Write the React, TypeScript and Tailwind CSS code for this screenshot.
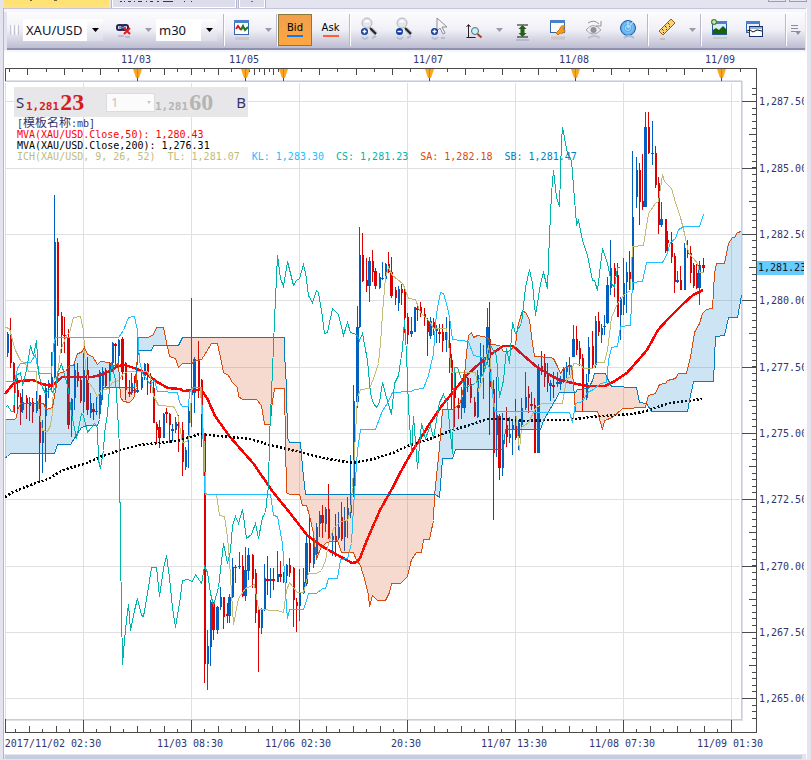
import type { ReactNode } from 'react';

type Candle = [number, number, number, number, number, 'b' | 'r'];

// x, high, low, body top, body bottom, direction
const candles: Candle[] = [
  [7, 332, 357, 334, 353, 'b'], [10, 318, 368, 334, 363, 'r'], [13, 362, 382, 363, 379, 'r'], [14, 378, 413, 379, 388, 'r'],
  [17, 378, 410, 390, 397, 'r'], [20, 393, 425, 397, 412, 'r'], [22, 389, 413, 402, 410, 'b'], [26, 395, 419, 398, 404, 'r'],
  [29, 397, 421, 402, 406, 'b'], [32, 398, 423, 402, 412, 'r'], [36, 391, 413, 401, 411, 'b'], [39, 395, 482, 395, 443, 'r'],
  [42, 420, 473, 430, 443, 'b'], [45, 383, 462, 388, 416, 'b'], [48, 380, 398, 383, 388, 'b'], [51, 352, 390, 377, 387, 'b'],
  [54, 195, 380, 242, 378, 'b'], [57, 238, 346, 242, 316, 'r'], [61, 312, 353, 316, 335, 'r'], [64, 317, 353, 335, 336, 'r'],
  [68, 329, 429, 338, 425, 'r'], [71, 398, 437, 399, 420, 'b'], [74, 362, 410, 370, 398, 'b'], [77, 363, 387, 372, 381, 'r'],
  [80, 377, 403, 380, 401, 'r'], [83, 353, 413, 370, 402, 'b'], [87, 357, 415, 370, 410, 'r'], [90, 393, 418, 403, 413, 'b'],
  [93, 403, 420, 409, 412, 'r'], [96, 397, 415, 411, 412, 'b'], [99, 370, 417, 372, 412, 'b'], [102, 367, 400, 371, 386, 'b'],
  [105, 368, 388, 370, 386, 'r'], [109, 362, 387, 363, 377, 'b'], [112, 342, 372, 343, 363, 'b'], [115, 343, 365, 344, 346, 'r'],
  [118, 339, 367, 340, 356, 'b'], [122, 337, 380, 339, 372, 'r'], [125, 362, 400, 363, 390, 'r'], [129, 380, 397, 392, 394, 'r'],
  [131, 373, 395, 383, 393, 'b'], [134, 376, 393, 390, 391, 'r'], [137, 380, 393, 390, 392, 'b'], [141, 373, 390, 377, 388, 'b'],
  [144, 363, 380, 364, 376, 'b'], [147, 363, 395, 364, 377, 'r'], [150, 373, 393, 380, 387, 'r'], [153, 380, 423, 388, 423, 'r'],
  [156, 422, 443, 424, 430, 'r'], [159, 420, 448, 427, 438, 'r'], [163, 413, 438, 414, 438, 'b'], [166, 408, 423, 412, 414, 'r'],
  [169, 413, 443, 414, 425, 'r'], [172, 424, 441, 429, 431, 'b'], [175, 417, 433, 422, 430, 'b'], [178, 415, 452, 424, 426, 'r'],
  [182, 422, 476, 430, 462, 'r'], [185, 447, 470, 450, 467, 'b'], [188, 407, 468, 411, 437, 'b'], [191, 298, 427, 391, 395, 'b'],
  [194, 357, 413, 359, 393, 'b'], [198, 341, 398, 359, 388, 'r'], [201, 379, 447, 380, 430, 'r'], [204, 433, 683, 433, 664, 'r'],
  [207, 630, 690, 646, 664, 'b'], [210, 600, 666, 602, 647, 'b'], [213, 602, 640, 603, 630, 'r'], [217, 606, 634, 607, 630, 'b'],
  [220, 587, 610, 597, 607, 'b'], [223, 597, 629, 597, 617, 'r'], [227, 603, 623, 614, 616, 'r'], [229, 594, 623, 597, 616, 'b'],
  [232, 558, 598, 567, 597, 'b'], [235, 565, 583, 567, 568, 'b'], [239, 552, 569, 566, 567, 'b'], [242, 555, 597, 566, 596, 'r'],
  [245, 547, 601, 570, 596, 'b'], [248, 548, 580, 555, 571, 'b'], [252, 554, 588, 555, 579, 'r'], [255, 569, 623, 573, 613, 'r'],
  [258, 608, 672, 610, 628, 'r'], [261, 608, 634, 609, 628, 'b'], [264, 564, 611, 578, 609, 'b'], [267, 556, 595, 579, 581, 'r'],
  [270, 568, 598, 579, 581, 'b'], [273, 568, 590, 579, 581, 'r'], [277, 551, 582, 574, 582, 'b'], [280, 561, 582, 574, 577, 'r'],
  [283, 572, 583, 576, 582, 'r'], [286, 564, 583, 565, 576, 'b'], [289, 558, 577, 565, 573, 'r'], [293, 567, 627, 568, 600, 'r'],
  [296, 598, 632, 602, 606, 'r'], [299, 569, 621, 593, 606, 'b'], [303, 568, 594, 582, 593, 'b'], [306, 536, 586, 543, 584, 'b'],
  [309, 515, 572, 543, 563, 'r'], [313, 537, 568, 540, 564, 'b'], [316, 523, 557, 527, 554, 'b'], [319, 511, 537, 515, 524, 'b'],
  [322, 505, 538, 515, 523, 'r'], [325, 507, 532, 509, 524, 'b'], [328, 484, 539, 509, 538, 'r'], [332, 533, 556, 536, 540, 'b'],
  [335, 514, 557, 536, 542, 'r'], [338, 512, 540, 527, 538, 'b'], [341, 502, 541, 517, 539, 'r'], [344, 507, 551, 520, 537, 'b'],
  [347, 497, 538, 508, 519, 'b'], [350, 455, 518, 493, 513, 'b'], [353, 385, 497, 401, 488, 'b'], [357, 306, 408, 327, 402, 'b'],
  [359, 227, 328, 255, 327, 'b'], [362, 233, 282, 255, 281, 'r'], [366, 258, 292, 280, 286, 'r'], [369, 257, 302, 261, 286, 'b'],
  [372, 250, 282, 261, 272, 'r'], [375, 268, 289, 271, 286, 'r'], [379, 273, 289, 277, 288, 'b'], [382, 262, 280, 278, 279, 'b'],
  [385, 263, 280, 264, 279, 'b'], [388, 252, 273, 264, 272, 'r'], [391, 257, 298, 272, 296, 'r'], [395, 287, 305, 290, 298, 'r'],
  [398, 286, 311, 289, 303, 'b'], [401, 284, 305, 289, 293, 'r'], [404, 288, 333, 292, 318, 'r'], [407, 313, 344, 317, 335, 'r'],
  [411, 317, 337, 331, 334, 'b'], [414, 307, 332, 307, 332, 'b'], [417, 305, 321, 308, 310, 'r'], [420, 302, 317, 307, 314, 'r'],
  [424, 308, 326, 314, 318, 'r'], [427, 318, 356, 321, 332, 'r'], [430, 317, 339, 321, 336, 'b'], [433, 318, 335, 322, 328, 'r'],
  [436, 325, 343, 328, 331, 'b'], [439, 324, 343, 332, 334, 'r'], [442, 324, 352, 332, 341, 'r'], [446, 317, 352, 332, 340, 'b'],
  [449, 317, 373, 343, 360, 'r'], [451, 354, 410, 360, 390, 'r'], [454, 372, 427, 373, 398, 'r'], [458, 398, 419, 405, 408, 'r'],
  [461, 387, 419, 397, 408, 'b'], [464, 370, 413, 374, 408, 'b'], [467, 377, 392, 378, 385, 'r'], [470, 378, 403, 384, 398, 'r'],
  [474, 397, 417, 402, 416, 'r'], [477, 370, 418, 375, 417, 'b'], [480, 343, 383, 358, 375, 'b'], [483, 345, 399, 357, 370, 'b'],
  [487, 308, 363, 327, 360, 'b'], [489, 302, 435, 339, 387, 'r'], [493, 380, 520, 389, 453, 'r'], [496, 377, 457, 415, 435, 'b'],
  [499, 414, 480, 416, 468, 'r'], [502, 413, 476, 440, 468, 'b'], [506, 407, 447, 425, 437, 'r'], [509, 417, 443, 434, 438, 'b'],
  [512, 420, 455, 425, 430, 'b'], [515, 399, 440, 425, 438, 'r'], [518, 420, 450, 423, 438, 'b'], [521, 398, 427, 408, 425, 'b'],
  [525, 372, 410, 397, 408, 'b'], [528, 386, 413, 394, 398, 'r'], [531, 392, 410, 404, 406, 'r'], [534, 398, 453, 405, 453, 'r'],
  [538, 364, 453, 367, 453, 'b'], [541, 351, 375, 366, 370, 'r'], [544, 354, 387, 363, 377, 'r'], [547, 363, 392, 373, 383, 'r'],
  [550, 380, 401, 383, 386, 'b'], [553, 372, 398, 385, 387, 'r'], [557, 372, 387, 382, 384, 'b'], [560, 376, 390, 381, 384, 'b'],
  [563, 367, 383, 368, 382, 'b'], [566, 362, 383, 367, 372, 'b'], [569, 357, 375, 365, 367, 'b'], [573, 325, 357, 339, 357, 'b'],
  [576, 326, 355, 339, 350, 'r'], [579, 341, 366, 348, 359, 'r'], [582, 354, 411, 358, 398, 'r'], [586, 374, 400, 383, 398, 'b'],
  [588, 337, 382, 347, 374, 'b'], [592, 331, 368, 346, 365, 'r'], [595, 316, 368, 321, 365, 'b'], [598, 312, 336, 321, 332, 'r'],
  [601, 324, 343, 328, 335, 'b'], [604, 315, 335, 326, 327, 'b'], [607, 277, 324, 285, 323, 'b'], [610, 240, 295, 268, 288, 'b'],
  [614, 263, 297, 268, 276, 'r'], [617, 263, 317, 275, 317, 'r'], [620, 297, 340, 298, 315, 'b'], [623, 258, 315, 283, 305, 'b'],
  [626, 262, 313, 272, 282, 'b'], [629, 251, 290, 272, 289, 'r'], [632, 151, 291, 217, 290, 'b'], [636, 157, 208, 170, 197, 'b'],
  [639, 163, 225, 170, 202, 'r'], [642, 154, 210, 201, 207, 'r'], [645, 112, 207, 127, 207, 'b'], [648, 112, 154, 127, 153, 'r'],
  [652, 121, 165, 153, 154, 'b'], [655, 146, 188, 153, 185, 'r'], [658, 177, 234, 183, 225, 'r'], [661, 202, 227, 219, 225, 'b'],
  [665, 219, 253, 219, 251, 'r'], [667, 231, 254, 240, 243, 'r'], [671, 232, 263, 243, 257, 'r'], [674, 253, 293, 256, 282, 'r'],
  [677, 271, 283, 280, 282, 'b'], [680, 266, 290, 280, 290, 'r'], [684, 243, 290, 248, 290, 'b'], [687, 240, 258, 250, 254, 'r'],
  [690, 246, 283, 253, 273, 'r'], [693, 263, 288, 265, 286, 'r'], [696, 264, 289, 273, 288, 'r'], [699, 261, 305, 265, 288, 'b'],
  [703, 258, 272, 265, 268, 'r'],
];

// bars whose body gets the full three pixels
const wideBars = [68, 87, 122, 159, 194, 213, 217, 229, 245, 248, 306, 322, 357, 369, 375, 391, 430, 446, 464, 487, 499, 538, 573, 607, 645, 661, 699];

const spanA =
  '5,419 14,419 16,417 17,410 20,403 43,403 46,409 52,407 55,390 58,373 65,371 69,365 73,365 77,353 81,352 84,347 87,354 92,356 97,364 100,361 108,362 112,366 118,363 120,397 123,401 129,402 133,398 136,387 137,337 148,337 153,334 156,327 163,327 165,337 169,356 175,358 178,367 182,363 192,363 193,361 201,359 205,353 211,343 217,343 220,357 223,372 228,375 232,382 237,387 238,396 242,399 256,399 261,405 264,424 270,424 271,408 274,388 284,388 285,440 286,492 289,494 299,494 302,505 306,505 309,515 313,533 316,559 320,548 326,542 337,540 341,552 353,552 356,560 360,565 365,582 368,595 369,606 372,595 377,600 385,600 389,592 391,583 400,583 407,576 411,559 416,552 421,552 423,539 429,539 433,520 434,495 439,447 442,409 453,409 460,402 463,387 466,353 468,335 471,332 473,337 477,335 487,337 491,344 499,345 503,351 508,351 515,345 517,327 522,310 526,313 529,320 532,343 534,356 550,357 553,358 557,366 560,373 563,368 571,365 573,383 575,411 597,411 602,429 604,420 612,417 622,408 645,407 648,395 655,393 659,384 665,383 667,380 675,378 678,373 686,373 690,357 694,332 699,323 702,313 706,309 712,308 714,273 716,263 724,263 728,243 732,237 734,237 737,232 741,231';

const spanB =
  '5,457 7,456 10,453 54,453 57,444 70,444 77,433 81,427 87,425 97,425 99,419 102,390 103,387 134,387 137,360 138,350 151,350 153,345 178,345 182,337 284,337 284,353 286,387 287,437 289,442 300,442 302,467 305,494 435,494 439,497 442,458 452,458 455,449 503,449 505,429 540,429 543,420 550,408 559,392 575,392 577,389 588,388 592,380 594,373 605,373 607,378 611,386 636,387 639,402 646,403 651,411 687,411 689,400 693,381 713,381 715,336 724,335 728,317 737,317 741,295';

const tenkan =
  '5,327 9,328 12,340 15,350 20,360 25,363 28,371 36,371 37,393 39,413 42,430 47,431 50,425 52,413 53,380 57,375 60,350 66,335 69,332 73,317 80,316 83,330 85,367 88,382 93,388 97,397 100,390 108,388 112,382 118,380 123,373 128,371 147,371 150,377 153,395 158,405 173,406 177,413 182,442 187,441 189,433 191,393 192,387 200,387 201,407 204,447 205,494 216,494 219,515 224,516 227,537 229,560 233,624 238,598 245,588 254,584 258,609 277,610 283,612 286,590 289,582 292,586 297,592 303,592 308,573 316,573 321,570 325,560 328,543 333,528 340,521 347,520 350,510 352,487 355,433 357,397 360,389 369,388 373,378 378,363 380,343 382,313 385,277 388,267 392,275 402,283 404,287 408,298 415,299 420,312 430,322 433,328 446,328 448,343 451,372 475,372 478,390 482,380 484,369 486,357 488,345 490,362 493,400 495,411 515,411 517,430 519,450 521,427 528,422 535,408 541,403 562,403 566,378 570,377 573,363 580,364 583,368 592,368 597,362 604,362 607,350 611,317 617,303 624,294 630,290 632,246 643,245 648,213 655,203 658,201 662,174 664,181 671,188 675,202 680,217 684,233 688,252 697,263 699,272 703,272';

const kijun =
  '5,381 14,381 17,368 20,363 30,362 35,354 37,367 39,373 51,373 53,345 55,337 118,337 123,330 128,317 134,316 137,330 139,360 142,373 150,384 154,380 157,391 177,392 179,402 182,406 188,406 189,392 192,387 201,387 202,420 203,457 204,492 207,494 270,494 273,515 277,516 282,543 284,573 286,607 287,618 289,609 303,609 306,600 308,593 316,593 322,588 325,588 328,578 337,578 340,559 347,558 351,543 353,507 357,450 360,429 375,429 379,418 382,410 387,403 392,392 410,391 415,389 423,388 428,375 433,353 435,323 437,307 440,292 443,293 447,307 449,317 452,339 468,341 473,355 483,357 489,367 492,393 494,411 569,412 572,422 575,403 582,401 587,392 593,389 600,383 606,382 608,360 611,347 617,346 620,326 630,325 632,282 642,281 646,262 662,262 666,255 670,242 675,238 678,229 684,226 699,226 703,214';

const chikou =
  '5,407 7,405 11,411 13,411 16,375 20,372 22,385 26,370 30,345 33,355 36,340 38,373 42,387 45,393 50,388 52,392 55,387 57,373 61,364 65,377 68,390 71,413 76,438 81,413 83,415 87,432 94,423 97,427 98,460 100,468 103,450 104,433 107,413 111,362 115,380 117,410 119,447 120,553 122,664 124,640 126,620 128,604 130,630 134,610 137,598 141,615 143,616 147,593 151,567 156,567 159,596 163,568 166,555 169,577 172,607 175,627 179,603 182,580 187,579 192,581 195,574 201,583 204,566 207,572 210,593 213,605 218,587 223,543 227,563 230,550 232,525 235,516 238,523 242,509 246,538 251,534 255,523 258,538 262,517 265,512 267,493 268,487 269,437 272,370 274,320 277,255 280,278 283,286 287,261 293,285 296,280 299,278 303,264 305,272 308,295 312,302 316,290 318,292 322,317 324,333 327,332 332,308 338,314 343,335 347,322 350,332 356,334 359,340 362,333 367,360 370,393 373,403 376,407 379,402 382,382 386,397 391,414 394,383 398,375 402,348 404,320 406,353 408,407 411,452 413,416 417,468 421,423 425,438 430,425 433,438 439,402 443,394 447,403 452,453 454,367 457,367 462,382 465,387 475,383 483,373 487,360 490,345 496,355 499,397 503,380 506,348 509,363 512,322 515,333 521,323 525,287 529,269 532,283 535,315 537,303 540,283 543,272 547,288 549,235 551,193 553,170 556,197 559,206 561,140 562,127 567,153 571,160 576,224 578,220 582,240 587,255 592,280 594,280 597,290 602,248 607,263 611,283 614,287 617,267 619,267';

const mva50 =
  '5,394 13,384 20,381 33,380 42,384 52,386 62,377 92,377 100,375 110,371 118,366 125,365 137,369 147,374 157,382 168,388 180,389 183,391 197,390 201,389 208,400 215,416 230,437 253,463 273,492 290,513 307,535 323,547 343,558 352,563 357,562 360,558 367,540 380,510 393,487 400,473 413,450 427,428 440,408 453,392 467,375 480,363 490,355 503,346 513,346 523,355 537,367 550,375 560,380 577,384 587,386 605,386 613,382 627,373 647,350 658,330 667,320 683,304 693,295 703,290';

const mva200 =
  '5,497 13,492 33,484 48,479 63,470 87,463 100,457 120,450 140,445 177,441 200,434 208,435 230,437 250,439 270,445 300,452 323,458 353,463 373,459 393,453 410,445 427,440 450,431 463,427 488,419 503,419 523,421 550,420 570,420 590,417 617,415 632,414 647,411 660,406 670,403 687,401 702,399';

const gridX = [83, 191, 299, 407, 515, 623, 731];
const gridY = [101, 168, 234, 300, 367, 433, 499, 566, 632, 698];
const prices = ['1,287.50', '1,285.00', '1,282.50', '1,280.00', '1,277.50', '1,275.00', '1,272.50', '1,270.00', '1,267.50', '1,265.00'];

const topTicks = [9, 27, 46, 64, 82, 100, 118, 150, 164, 177, 191, 204, 218, 231, 249, 254, 259, 264, 269, 273, 278, 301, 319, 337, 356, 374, 392, 410, 447, 465, 483, 502, 520, 538, 556, 593, 611, 629, 648, 666, 684, 702, 740];
const tallTopTicks = [27, 64, 100, 164, 191, 218, 254, 264, 273, 319, 356, 392, 465, 502, 538, 611, 648, 684];

const dayMarks = [
  { x: 137, label: '11/03' },
  { x: 245, label: '11/05' },
  { x: 283, label: '' },
  { x: 429, label: '11/07' },
  { x: 575, label: '11/08' },
  { x: 721, label: '11/09' },
];

const timeLabels = [
  { x: 53, label: '2017/11/02 02:30' },
  { x: 190, label: '11/03 08:30' },
  { x: 298, label: '11/06 02:30' },
  { x: 406, label: '20:30' },
  { x: 514, label: '11/07 13:30' },
  { x: 622, label: '11/08 07:30' },
  { x: 730, label: '11/09 01:30' },
];

const bottomTicks = Array.from({ length: 54 }, (_, i) => {
  const x = Math.round(15 + i * 13.5);
  return { x, major: i % 8 === 5, tall: i % 2 === 1 };
});

// one tick per 0.25, from 1,264.25 up to 1,288.00
const priceTicks = Array.from({ length: 96 }, (_, i) => Math.round(718 - i * 6.634));

const reversed = (points: string) => points.split(' ').reverse().join(' ');

function Line({ points, color }: { points: string; color: string }) {
  return <polyline points={points} fill="none" stroke={color} />;
}

function Chart() {
  const cloud = `${spanA} ${reversed(spanB)}`;
  return (
    <svg viewBox="4 52 802 702" className="block w-full" role="img" aria-label="XAU/USD m30 chart">
      <defs>
        <clipPath id="above-b">
          <polygon points={`5,81 ${spanB} 741,81`} />
        </clipPath>
        <clipPath id="below-b">
          <polygon points={`5,720 ${spanB} 741,720`} />
        </clipPath>
        <clipPath id="labels">
          <rect x="4" y="52" width="800" height="702" />
        </clipPath>
      </defs>

      {/* Grid */}
      <g shapeRendering="crispEdges" fill="#e0e0e0">
        {gridX.map((x) => <rect key={x} x={x} y="83" width="1" height="637" />)}
        {gridY.map((y) => <rect key={y} x="5" y={y} width="735" height="1" />)}
        <rect x="5" y="83" width="1" height="637" />
      </g>
      <g shapeRendering="crispEdges">
        <rect x="5" y="80" width="737" height="1" fill="#dde2ea" />
        <rect x="5" y="81" width="737" height="1" fill="#c5cdd9" />
        <rect x="741" y="81" width="1" height="639" fill="#c5cddd" />
        <rect x="742" y="81" width="1" height="640" fill="#dde2ea" />
        <rect x="5" y="719" width="737" height="1" fill="#c5cddd" />
        <rect x="5" y="720" width="737" height="1" fill="#e0e0e6" />
      </g>

      {/* Candles */}
      <g shapeRendering="crispEdges">
        {candles.map(([x, high, low, top, bottom, dir]) => {
          const wide = wideBars.includes(x) || bottom - top < 4;
          return (
            <g key={x} fill={dir === 'b' ? '#0060c0' : '#dc0000'}>
              <rect x={x} y={high} width="1" height={low - high} />
              <rect x={wide ? x - 1 : x} y={top} width={wide ? 3 : 2} height={Math.max(bottom - top, 1)} />
            </g>
          );
        })}
      </g>

      <g shapeRendering="crispEdges">
        <polyline points={mva50} fill="none" stroke="#ff0000" strokeWidth="2.5" />
        <polyline points={mva200} fill="none" stroke="#000000" strokeWidth="2.5" strokeDasharray="2 2" />

        {/* Ichimoku cloud */}
        <polygon points={cloud} fill="#007ac1" fillOpacity="0.2" clipPath="url(#above-b)" />
        <polygon points={cloud} fill="#d84410" fillOpacity="0.2" clipPath="url(#below-b)" />
        <g transform="translate(0.5 0.5)">
          <Line points={tenkan} color="#c0bc78" />
          <Line points={spanA} color="#d94a0b" />
          <Line points={spanB} color="#0080c0" />
          <Line points={kijun} color="#1ec0ff" />
          <Line points={chikou} color="#00b4ac" />
        </g>
      </g>

      {/* Axes */}
      <g shapeRendering="crispEdges" fill="#4a4a4a">
        <rect x="5" y="68" width="752" height="1" />
        <rect x="5" y="68" width="1" height="13" />
        <rect x="756" y="68" width="1" height="665" />
        <rect x="5" y="732" width="752" height="1" />
        <rect x="5" y="719" width="1" height="13" />
        {topTicks.map((x) => (
          <rect key={x} x={x} y="68" width="1" height={tallTopTicks.includes(x) ? 7 : 4} />
        ))}
        {bottomTicks.map((t) => (
          <rect key={t.x} x={t.x} y={t.major ? 720 : t.tall ? 726 : 729} width="1" height={t.major ? 12 : t.tall ? 6 : 3} />
        ))}
        {priceTicks.map((y) => <rect key={y} x="752" y={y} width="4" height="1" />)}
        {gridY.map((y) => <rect key={y} x="742" y={y} width="14" height="1" />)}
        {gridY.slice(0, 9).map((y) => <rect key={y} x="749" y={y + 33} width="7" height="1" />)}
      </g>
      {dayMarks.map((m) => (
        <g key={m.x}>
          <rect x={m.x} y="69" width="1" height="12" fill="#4a4a4a" />
          <path d={`M${m.x - 4} 69h9l-3 9h-3z`} fill="#fca61f" />
          <rect x={m.x} y="69" width="1" height="9" fill="#d98416" />
        </g>
      ))}

      <g clipPath="url(#labels)" fill="#34346c" fontFamily="'DejaVu Sans Mono', monospace" fontSize="10">
        <rect x="757" y="261" width="48" height="14" fill="#66ccff" />
        <g textAnchor="middle">
          {dayMarks.map((m) => <text key={m.x} x={m.x - 1} y="63">{m.label}</text>)}
          {timeLabels.map((t) => <text key={t.label} x={t.x} y="747">{t.label}</text>)}
        </g>
        {gridY.map((y, i) => <text key={y} x="759" y={y + 4}>{prices[i]}</text>)}
        <text x="758" y="271" fill="#101828">1,281.23</text>
      </g>
    </svg>
  );
}

function Legend() {
  return (
    <div className="absolute top-[68px] left-[13px] font-['DejaVu_Sans_Mono','Noto_Sans_CJK_SC',monospace] text-[10px] leading-[11px] whitespace-pre text-[#34346c]">
      <p>[<span className="text-[12px]">模板名称</span>:mb]</p>
      <p className="text-[#ff0000]">MVA(XAU/USD.Close,50): 1,280.43</p>
      <p className="text-black">MVA(XAU/USD.Close,200): 1,276.31</p>
      <p className="flex gap-3">
        <span className="text-[#c0bc78]">ICH(XAU/USD, 9, 26, 52)</span>
        <span className="text-[#c0bc78]">TL: 1,281.07</span>
        <span className="text-[#1ec0ff]">KL: 1,283.30</span>
        <span className="text-[#00b4ac]">CS: 1,281.23</span>
        <span className="text-[#d94a0b]">SA: 1,282.18</span>
        <span className="text-[#0080c0]">SB: 1,281.47</span>
      </p>
    </div>
  );
}

function QuotePanel() {
  return (
    <div className="absolute top-[37px] left-[10px] flex h-[30px] w-[234px] items-center bg-[#e7e7e9] font-['DejaVu_Sans_Mono',monospace] text-[11px] leading-none">
      <button className="flex w-[92px] items-center font-bold text-[#d41c1c]">
        <span className="w-3 font-['Noto_Sans'] text-[15px] font-normal text-[#34346c]">S</span>
        <span className="pt-2">1,281</span>
        <span className="pl-px font-['Liberation_Serif'] text-[24px]">23</span>
      </button>
      <select aria-label="Amount" className="h-[19px] w-[49px] appearance-none border border-[#dcdcdc] bg-[#fbfbfb] px-1 font-['Noto_Sans'] text-[13px] leading-none text-[#c4c4c4]">
        <option>1</option>
      </select>
      <svg className="-ml-2 mr-1" width="4" height="3" viewBox="0 0 4 3"><path d="M0 0h4L2 3z" fill="#c8c8c8" /></svg>
      <button className="flex flex-1 items-center text-[#b4b4b4]">
        <span className="pt-2 font-bold">1,281</span>
        <span className="pl-px font-['Liberation_Serif'] text-[24px] font-bold">60</span>
        <span className="ml-auto pr-[2px] font-['Noto_Sans'] text-[15px] text-[#34346c]">B</span>
      </button>
    </div>
  );
}

function Sep() {
  return <div className="h-8 w-[2px] shrink-0 border-l border-[#b9b9cd] bg-white" />;
}

function Drop({ label }: { label: string }) {
  return (
    <button aria-label={label} className="flex w-4 shrink-0 justify-center">
      <svg width="7" height="4" viewBox="0 0 7 4"><path d="M0 0h7L3.500 4z" fill="#9a9aac" /></svg>
    </button>
  );
}

function Tool({ label, children }: { label: string; children: ReactNode }) {
  return (
    <button aria-label={label} className="flex w-[35px] shrink-0 justify-center">
      <svg width="20" height="26" viewBox="0 0 20 26">{children}</svg>
    </button>
  );
}

function Combo({ label, value, wide }: { label: string; value: string; wide?: boolean }) {
  return (
    <div className={wide ? 'relative w-20 shrink-0' : 'relative w-[61px] shrink-0'}>
      <select aria-label={label} className="block h-[22px] w-full appearance-none bg-white pl-[3px] font-['Noto_Sans',sans-serif] text-[13px] leading-[22px] text-[#14142c]">
        <option>{value}</option>
      </select>
      <span className="pointer-events-none absolute inset-y-0 right-0 flex w-4 items-center justify-center bg-linear-to-b from-white to-[#dcdce8]">
        <svg width="7" height="4" viewBox="0 0 7 4"><path d="M0 0h7L3.500 4z" fill="#000" /></svg>
      </span>
    </div>
  );
}

function Magnifier({ minus }: { minus?: boolean }) {
  return (
    <>
      <path d="M12 12l5 5" stroke="#b8b8c4" strokeWidth="4" />
      <path d="M11 11l6 6" stroke="#222" strokeWidth="2" />
      <circle cx="8" cy="6" r="5" fill="#e4e4ea" stroke="#b4b4bc" />
      <path d="M5 5q3-4 6 0q-3 1-6 0z" fill="#fff" />
      <circle cx="5.500" cy="14.500" r="3.500" fill="#0b3c9c" />
      <path d={minus ? 'M3.500 14.500h4' : 'M3.500 14.500h4M5.500 12.500v4'} stroke="#fff" strokeWidth="1.500" />
      <path d="M3 20q3 4 6 0M13 21l4-2" stroke="#9fa9c6" fill="none" strokeWidth="2" opacity=".6" />
    </>
  );
}

function Toolbar() {
  return (
    <div className="mr-[1px] ml-[3px] flex h-[38px] items-center border-b-2 border-[#8f8fae] bg-linear-to-b from-[#fdfdff] via-[#efeff6] to-[#bdbdd2] pb-[1px]">
      <div className="ml-[3px] flex h-[10px] w-[13px] shrink-0 gap-[1px]">
        <i className="w-px bg-[#c4c4d4]" /><i className="w-px bg-white" /><i className="w-px bg-[#c4c4d4]" /><i className="w-px bg-white" /><i className="w-px bg-[#c4c4d4]" />
      </div>
      <div className="mr-[2px]"><Combo label="Symbol" value="XAU/USD" wide /></div>
      <Tool label="Unlink symbol">
        <g fill="none" stroke="#25255a" strokeWidth="2">
          <rect x="4" y="8" width="6" height="5" rx="2" />
          <rect x="9" y="8" width="6" height="5" rx="2" />
          <path d="M6 10.500h7" stroke="#6f78a8" />
        </g>
        <path d="M11 11l6 6M17 11l-6 6" stroke="#f01414" strokeWidth="2" />
        <path d="M5 19h6M12 20h5" stroke="#a7a7c0" strokeWidth="2" opacity=".6" />
      </Tool>
      <Drop label="Link options" />
      <Combo label="Period" value="m30" />
      <div className="w-[6px]" />
      <Sep />
      <Tool label="Indicators">
        <rect x="1.500" y="3.500" width="14" height="14" fill="#fff" stroke="#3564a8" />
        <rect x="1" y="3" width="15" height="3" fill="#4a80cc" />
        <path d="M3 12l2-3 3 4" stroke="#e01818" strokeWidth="2" fill="none" />
        <path d="M8 13l2-4 2 4 3-3" stroke="#187a18" strokeWidth="2" fill="none" />
        <path d="M2 20h14v3H2z" fill="#c9b0b8" opacity=".5" />
      </Tool>
      <Drop label="Indicator options" />
      <Sep />
      <button className="flex h-8 w-[34px] shrink-0 flex-col items-center justify-center border border-[#8c7838] bg-linear-to-b from-[#f0a04c] to-[#ffa640] font-['DejaVu_Sans'] text-[10px] leading-3 text-black">
        Bid
        <span className="mt-px h-[2px] w-4 bg-[#0a7cf0]" />
      </button>
      <button className="flex h-8 w-[37px] shrink-0 flex-col items-center justify-center font-['DejaVu_Sans'] text-[10px] leading-3 text-black">
        Ask
        <span className="mt-px h-[2px] w-4 bg-[#ff6030]" />
      </button>
      <Sep />
      <Tool label="Zoom in"><Magnifier /></Tool>
      <Tool label="Zoom out"><Magnifier minus /></Tool>
      <Tool label="Zoom cursor">
        <path d="M8 1v13l3-3 3 6 2-1-3-6h5z" fill="#f6f6fa" stroke="#8e8e9a" />
        <circle cx="5.500" cy="14.500" r="3.500" fill="#0b3c9c" />
        <path d="M3.500 14.500h4M5.500 12.500v4" stroke="#fff" strokeWidth="1.500" />
        <path d="M3 20q3 4 6 0M12 21h4" stroke="#9fa9c6" fill="none" strokeWidth="2" opacity=".6" />
      </Tool>
      <Tool label="Scale zoom">
        <path d="M4.500 8v12M2.500 10l2-2.500L6.500 10M2.500 20.500h9" stroke="#222" fill="none" />
        <circle cx="11" cy="14" r="3.500" fill="#bff2fa" stroke="#5a6a74" />
        <path d="M13.500 17l4 3.500" stroke="#b43c14" strokeWidth="2" />
      </Tool>
      <Drop label="Scale options" />
      <Tool label="Fit height">
        <path d="M2 8h11M2 20h11" stroke="#111" />
        <path d="M7.500 8l4 4h-2v4h2l-4 4-4-4h2v-4h-2z" fill="#235f16" />
        <path d="M1 23h13" stroke="#9c9cb4" />
      </Tool>
      <Tool label="Chart properties">
        <rect x=".5" y="3.500" width="14" height="12" fill="#fff" stroke="#3564a8" />
        <rect x="0" y="3" width="15" height="3" fill="#4a80cc" />
        <path d="M6 16l4-4c0-3 3-4 5-3l-2 3 2 1c0 3-3 4-5 3l-2 2z" fill="#f59a1e" stroke="#c87410" />
        <path d="M1 21h14" stroke="#ccb0a8" strokeWidth="3" opacity=".5" />
      </Tool>
      <Tool label="Show or hide">
        <path d="M1 13q7-9 15 0q-8 8-15 0z" fill="#eee" stroke="#a4a4ac" />
        <circle cx="8.500" cy="13" r="3" fill="#909098" />
        <path d="M3 6q6-4 11 1M16 4v5h-5" stroke="#909098" fill="none" />
        <path d="M3 21q7-4 12 0" stroke="#c0c0cc" fill="none" strokeWidth="2" />
      </Tool>
      <Tool label="Connection">
        <circle cx="8" cy="11" r="7.500" fill="#5cb0ec" stroke="#2458a0" />
        <circle cx="8" cy="11" r="5" fill="none" stroke="#8cc8f4" />
        <circle cx="8" cy="11" r="2.500" fill="none" stroke="#b0dcfa" />
        <path d="M8 11L13 5M8 11V4" stroke="#d0ecff" />
        <path d="M4 21q5-4 10 0" stroke="#a8bcd8" fill="none" strokeWidth="2" />
      </Tool>
      <Sep />
      <Tool label="Measure">
        <path d="M2 14L14 2l4 4L6 18z" fill="#fbd372" stroke="#9a5a1c" />
        <path d="M5 12l1.500 1.500M8 9l1.500 1.500M11 6l1.500 1.500M6 15l1 1M9 12l1 1M12 9l1 1" stroke="#4c2a08" />
        <path d="M3 22h5" stroke="#c8bcb4" strokeWidth="2" />
      </Tool>
      <Drop label="Measure options" />
      <Sep />
      <Tool label="Add picture">
        <rect x="2.500" y="4.500" width="14" height="13" fill="#d8ecfc" stroke="#2858a0" />
        <rect x="3" y="4" width="14" height="3" fill="#4a80cc" />
        <path d="M3 17v-4l3-2 3 2 4-4 4 4v4z" fill="#196010" />
        <circle cx="4" cy="5" r="3" fill="#4c8430" />
        <path d="M2 5h4M4 3v4" stroke="#fff" />
        <path d="M3 20h14v2H3z" fill="#b0c4b8" opacity=".6" />
      </Tool>
      <Tool label="Arrange windows">
        <rect x="1.500" y="4.500" width="13" height="11" fill="#e8f0fc" stroke="#3564a8" />
        <rect x="1" y="4" width="14" height="3" fill="#4a80cc" />
        <rect x="4.500" y="9.500" width="13" height="10" fill="#fff" stroke="#16306c" />
        <path d="M4 11h14" stroke="#3564a8" />
        <path d="M2 14l3-1 3 2 4-2 5 1" stroke="#111" fill="none" />
      </Tool>
      <div className="ml-auto flex items-center">
        <Sep />
        <button aria-label="More" className="flex w-[18px] justify-center">
          <svg width="10" height="10" viewBox="0 0 10 10">
            <path d="M0 .5h7M0 3.500h7M0 6.500h5" stroke="#8c8ca4" />
            <path d="M4 6h6L7 10z" fill="#8c8ca4" />
          </svg>
        </button>
      </div>
    </div>
  );
}

export default function App() {
  return (
    <div className="min-h-screen bg-[#e4e4f0] pr-1 pl-[3px]">
      {/* Tabs */}
      <div className="flex h-2 items-end gap-[3px] overflow-hidden pl-[1px]">
        <button className="h-6 w-[105px] shrink-0 bg-linear-to-t from-[#ffe47c] to-[#ffd95e] pt-4" aria-label="XAU/USD">
          <svg width="105" height="8" viewBox="0 0 105 8"><path d="M26 .5h2M50 .5h3" stroke="#6c6438" /></svg>
        </button>
        <button className="h-6 w-[124px] shrink-0 border border-white bg-[#dcdcea] pt-4 ring-1 ring-[#b4b4cc]" aria-label="Chart 2">
          <svg width="122" height="7" viewBox="0 0 122 7">
            <path d="M7 .5h2M11 .5h1M15 .5h3M21 .5h1M25 .5h4M33 .5h1M37 .5h3M44 .5h2M50 .5h10M71 .5h1M78 .5h1" stroke="#34346c" />
          </svg>
        </button>
        <button className="h-6 w-[26px] shrink-0 border border-white bg-[#dcdcea] pt-4 ring-1 ring-[#b4b4cc]" aria-label="New tab">
          <svg width="24" height="7" viewBox="0 0 24 7"><path d="M11 .5h2" stroke="#6c6c84" /></svg>
        </button>
        <div className="ml-auto flex gap-[3px] pb-[6px]">
          <button className="h-4 w-[18px] border border-[#9c9cb4]" aria-label="Previous tab" />
          <button className="h-4 w-[18px] border border-[#9c9cb4]" aria-label="Next tab" />
        </div>
      </div>

      <div className="border-x border-l-[#b4b4cc] border-r-white">
        <div className="h-1 border-t border-[#c4c4d8] bg-[#f6f6fb]" />
        <Toolbar />
        <div className="bg-linear-to-b from-[#f0f0f8] to-white to-[3px]">
          <div className="relative">
            <div className="h-[2px]" />
            <Chart />
            <Legend />
            <QuotePanel />
          </div>
        </div>
        <div className="mt-px mr-1 ml-[1px] h-1 bg-[#c5cede]" />
      </div>
    </div>
  );
}
